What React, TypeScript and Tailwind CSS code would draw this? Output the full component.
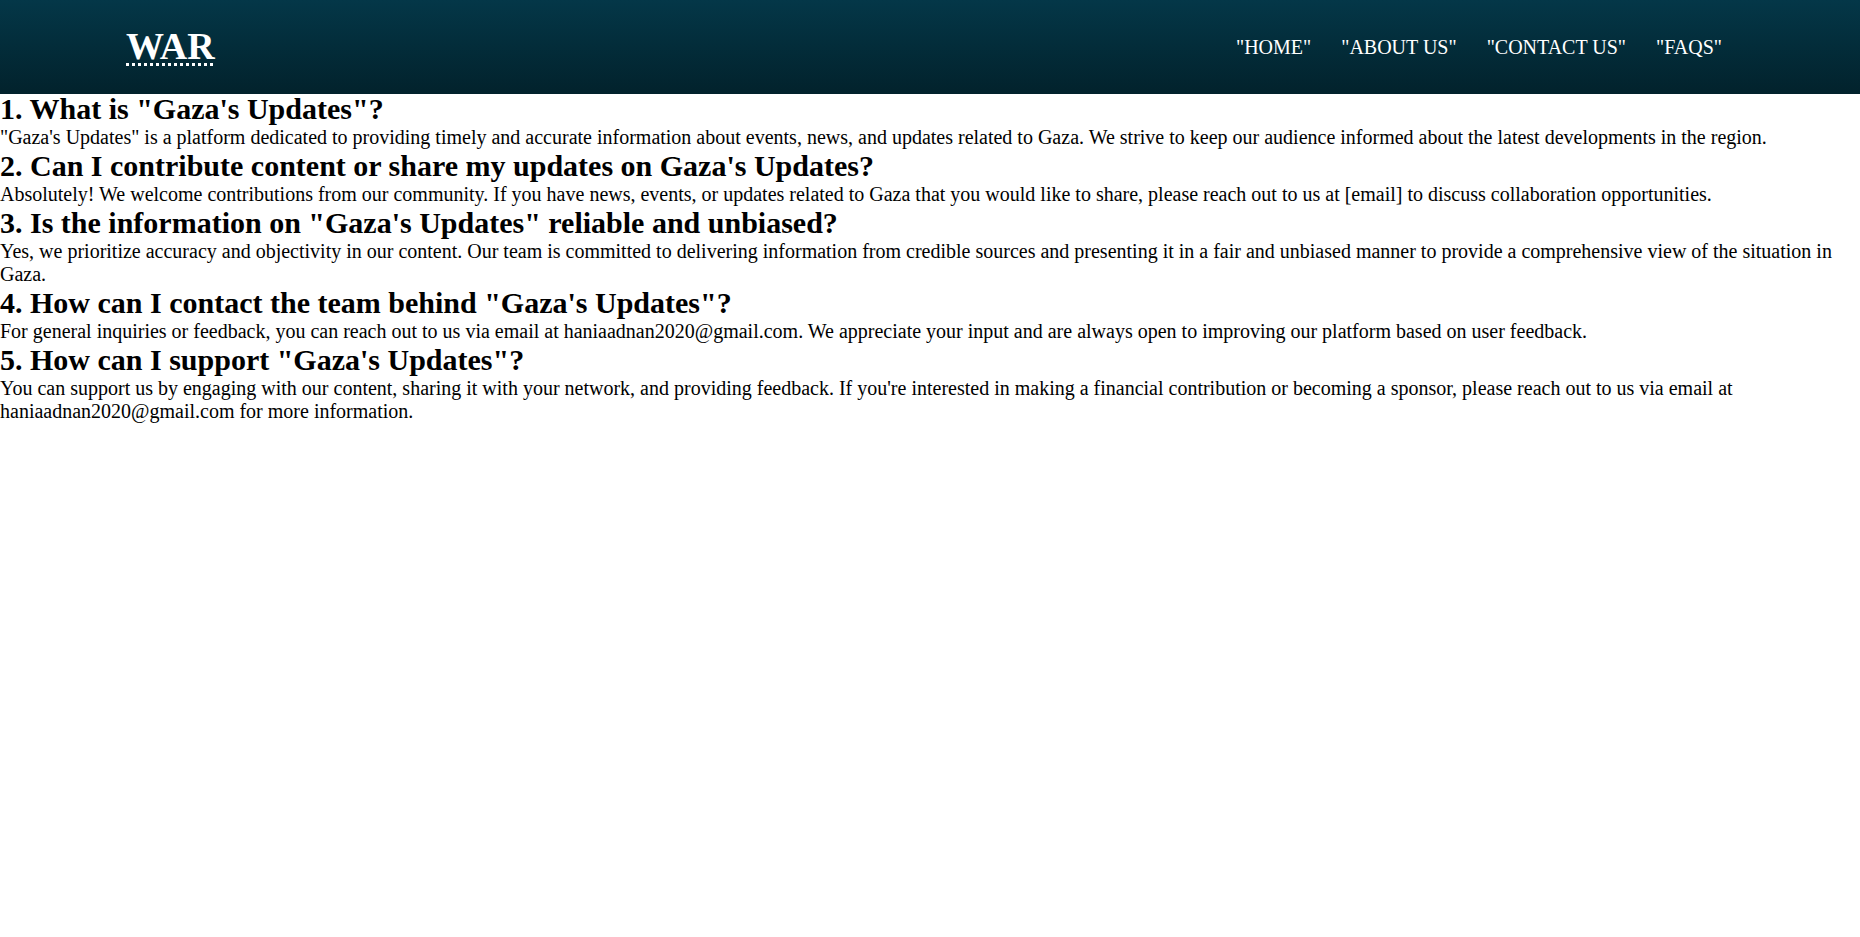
const faqs = [
  {
    q: '1. What is "Gaza\'s Updates"?',
    a: '"Gaza\'s Updates" is a platform dedicated to providing timely and accurate information about events, news, and updates related to Gaza. We strive to keep our audience informed about the latest developments in the region.',
  },
  {
    q: "2. Can I contribute content or share my updates on Gaza's Updates?",
    a: "Absolutely! We welcome contributions from our community. If you have news, events, or updates related to Gaza that you would like to share, please reach out to us at [email] to discuss collaboration opportunities.",
  },
  {
    q: '3. Is the information on "Gaza\'s Updates" reliable and unbiased?',
    a: "Yes, we prioritize accuracy and objectivity in our content. Our team is committed to delivering information from credible sources and presenting it in a fair and unbiased manner to provide a comprehensive view of the situation in Gaza.",
  },
  {
    q: '4. How can I contact the team behind "Gaza\'s Updates"?',
    a: "For general inquiries or feedback, you can reach out to us via email at haniaadnan2020@gmail.com. We appreciate your input and are always open to improving our platform based on user feedback.",
  },
  {
    q: '5. How can I support "Gaza\'s Updates"?',
    a: "You can support us by engaging with our content, sharing it with your network, and providing feedback. If you're interested in making a financial contribution or becoming a sponsor, please reach out to us via email at haniaadnan2020@gmail.com for more information.",
  },
];

const navLinks = ['"HOME"', '"ABOUT US"', '"CONTACT US"', '"FAQS"'];

export default function App() {
  return (
    <div className="min-h-[937px] bg-white text-black font-['Liberation_Serif','Times_New_Roman',serif]">
      <header className="flex h-[94px] items-center justify-between bg-gradient-to-b from-[#043748] to-[#02222c] pl-[126px] pr-[138px]">
        <abbr
          title="WAR"
          className="-mt-[3px] text-[38px] font-bold leading-none text-white underline decoration-dotted decoration-[3px] underline-offset-[4px]"
        >
          WAR
        </abbr>
        <nav className="-mt-[1px] flex items-center gap-[30px]">
          {navLinks.map((link) => (
            <a key={link} href="#" className="text-[20px] text-white">
              {link}
            </a>
          ))}
        </nav>
      </header>

      <main className="-mt-[2px]">
        {faqs.map((f) => (
          <section key={f.q}>
            <h2 className="text-[30px] font-bold leading-[34px]">{f.q}</h2>
            <p className="text-[20px] leading-[23px]">{f.a}</p>
          </section>
        ))}
      </main>
    </div>
  );
}
